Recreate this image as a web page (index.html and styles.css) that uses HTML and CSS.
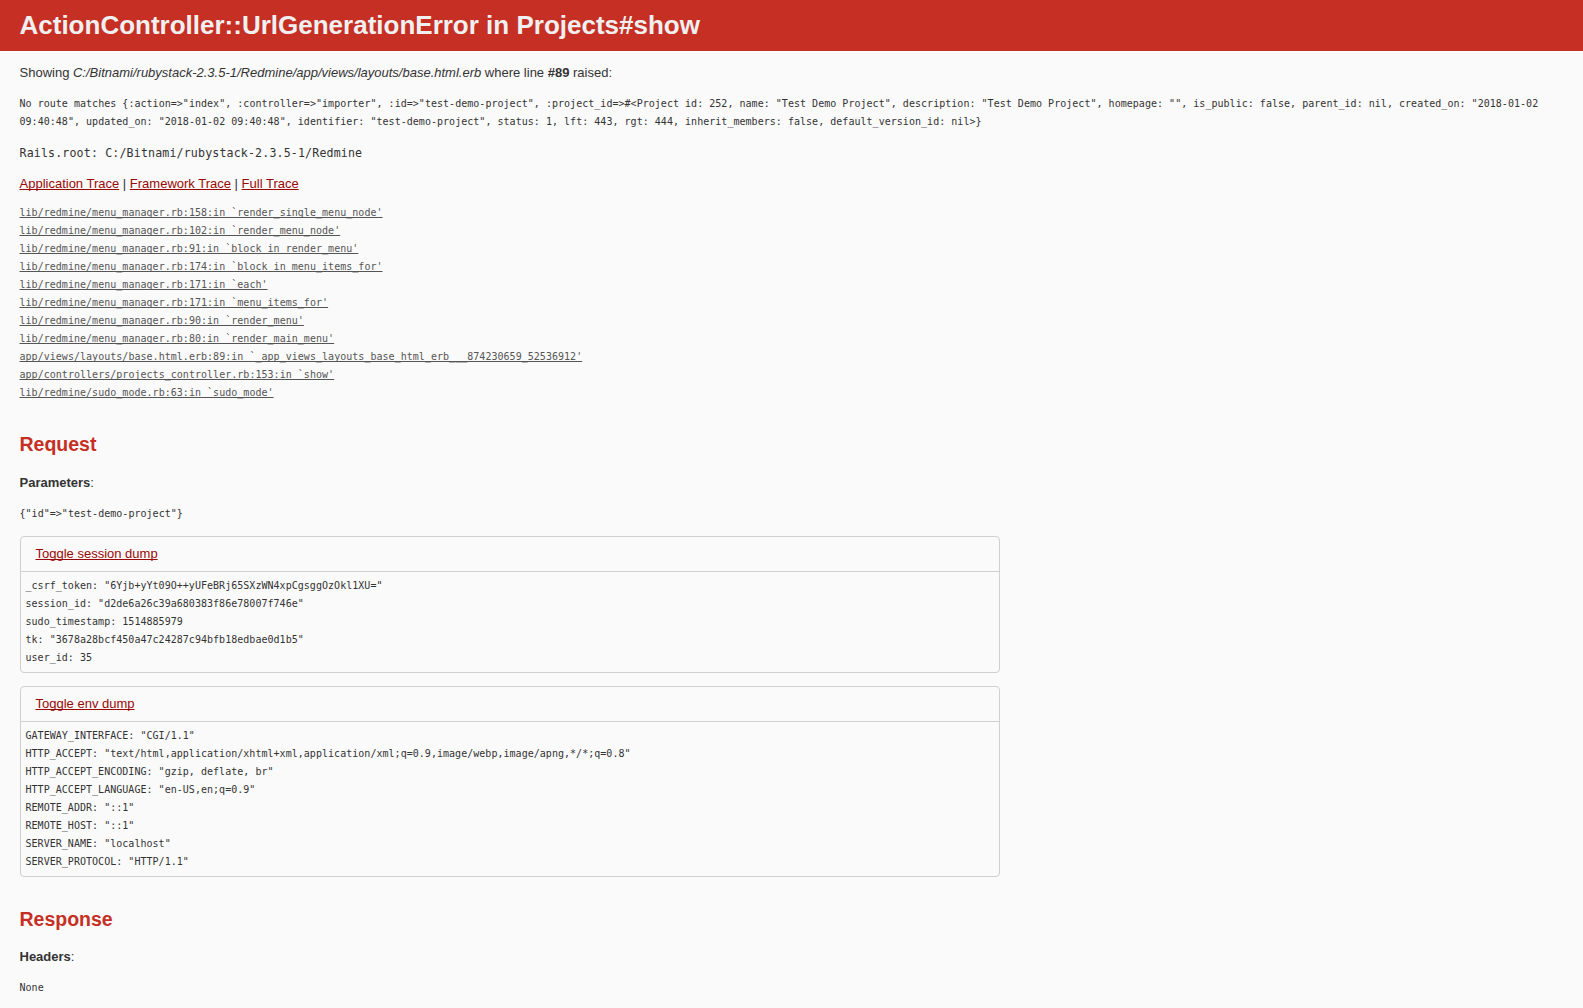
FILE: index.html
```html
<!DOCTYPE html>
<html lang="en">
<head>
<meta charset="utf-8">
<title>Action Controller: Exception caught</title>
<link rel="stylesheet" href="styles.css">
</head>
<body>
<header class="page-header">
  <h1>ActionController::UrlGenerationError in Projects#show</h1>
</header>
<div class="container">
  <p class="showing">Showing <i>C:/Bitnami/rubystack-2.3.5-1/Redmine/app/views/layouts/base.html.erb</i> where line <b>#89</b> raised:</p>
  <pre class="message">No route matches {:action=&gt;"index", :controller=&gt;"importer", :id=&gt;"test-demo-project", :project_id=&gt;#&lt;Project id: 252, name: "Test Demo Project", description: "Test Demo Project", homepage: "", is_public: false, parent_id: nil, created_on: "2018-01-02 09:40:48", updated_on: "2018-01-02 09:40:48", identifier: "test-demo-project", status: 1, lft: 443, rgt: 444, inherit_members: false, default_version_id: nil&gt;}</pre>
  <p class="root">Rails.root: C:/Bitnami/rubystack-2.3.5-1/Redmine</p>
  <p class="trace-tabs"><a href="#">Application Trace</a> | <a href="#">Framework Trace</a> | <a href="#">Full Trace</a></p>
  <pre class="trace"><a href="#">lib/redmine/menu_manager.rb:158:in `render_single_menu_node'</a>
<a href="#">lib/redmine/menu_manager.rb:102:in `render_menu_node'</a>
<a href="#">lib/redmine/menu_manager.rb:91:in `block in render_menu'</a>
<a href="#">lib/redmine/menu_manager.rb:174:in `block in menu_items_for'</a>
<a href="#">lib/redmine/menu_manager.rb:171:in `each'</a>
<a href="#">lib/redmine/menu_manager.rb:171:in `menu_items_for'</a>
<a href="#">lib/redmine/menu_manager.rb:90:in `render_menu'</a>
<a href="#">lib/redmine/menu_manager.rb:80:in `render_main_menu'</a>
<a href="#">app/views/layouts/base.html.erb:89:in `_app_views_layouts_base_html_erb___874230659_52536912'</a>
<a href="#">app/controllers/projects_controller.rb:153:in `show'</a>
<a href="#">lib/redmine/sudo_mode.rb:63:in `sudo_mode'</a></pre>
  <h2>Request</h2>
  <p class="label"><b>Parameters</b>:</p>
  <pre class="params">{"id"=&gt;"test-demo-project"}</pre>
  <div class="details">
    <div class="summary"><a href="#">Toggle session dump</a></div>
    <pre class="dump">_csrf_token: "6Yjb+yYt09O++yUFeBRj65SXzWN4xpCgsggOzOkl1XU="
session_id: "d2de6a26c39a680383f86e78007f746e"
sudo_timestamp: 1514885979
tk: "3678a28bcf450a47c24287c94bfb18edbae0d1b5"
user_id: 35</pre>
  </div>
  <div class="details">
    <div class="summary"><a href="#">Toggle env dump</a></div>
    <pre class="dump">GATEWAY_INTERFACE: "CGI/1.1"
HTTP_ACCEPT: "text/html,application/xhtml+xml,application/xml;q=0.9,image/webp,image/apng,*/*;q=0.8"
HTTP_ACCEPT_ENCODING: "gzip, deflate, br"
HTTP_ACCEPT_LANGUAGE: "en-US,en;q=0.9"
REMOTE_ADDR: "::1"
REMOTE_HOST: "::1"
SERVER_NAME: "localhost"
SERVER_PROTOCOL: "HTTP/1.1"</pre>
  </div>
  <h2 class="response">Response</h2>
  <p class="label"><b>Headers</b>:</p>
  <pre class="params">None</pre>
</div>
</body>
</html>
```
FILE: styles.css
```css
html, body {
  overflow: hidden;
}
body {
  margin: 0;
  background: #fafafa;
  color: #333;
  font-family: "Liberation Sans", Arial, sans-serif;
  font-size: 13px;
  line-height: 18px;
}
p {
  margin: 13px 0;
}
a {
  color: #980905;
  text-decoration-skip-ink: none;
}
pre {
  font-family: "DejaVu Sans Mono", monospace;
  font-size: 10px;
  letter-spacing: 0.03px;
  line-height: 18px;
  white-space: pre-wrap;
  margin: 11px 0;
}
.page-header {
  background: #c52f24;
  color: #f0f0f0;
  padding: 6px 19.5px;
}
h1 {
  margin: 5px 0;
  font-size: 26px;
  line-height: 29px;
}
.container {
  padding: 0 19.5px;
}
.root {
  font-family: "DejaVu Sans Mono", monospace;
  font-size: 11.6px;
  letter-spacing: 0.16px;
}
.trace-tabs {
  margin-bottom: 11px;
}
.trace {
  margin: 0 0 13px;
}
.trace a {
  color: #555;
}
h2 {
  color: #c52f24;
  font-size: 19.5px;
  line-height: 25px;
  margin: 30px 0 17px;
}
.response {
  margin-bottom: 16px;
}
.details {
  width: 978px;
  border: 1px solid #d0d0d0;
  border-radius: 4px;
  margin: 13px 0;
}
.summary {
  padding: 8px 15px;
  border-bottom: 1px solid #d0d0d0;
}
.dump {
  margin: 5px;
}
```
